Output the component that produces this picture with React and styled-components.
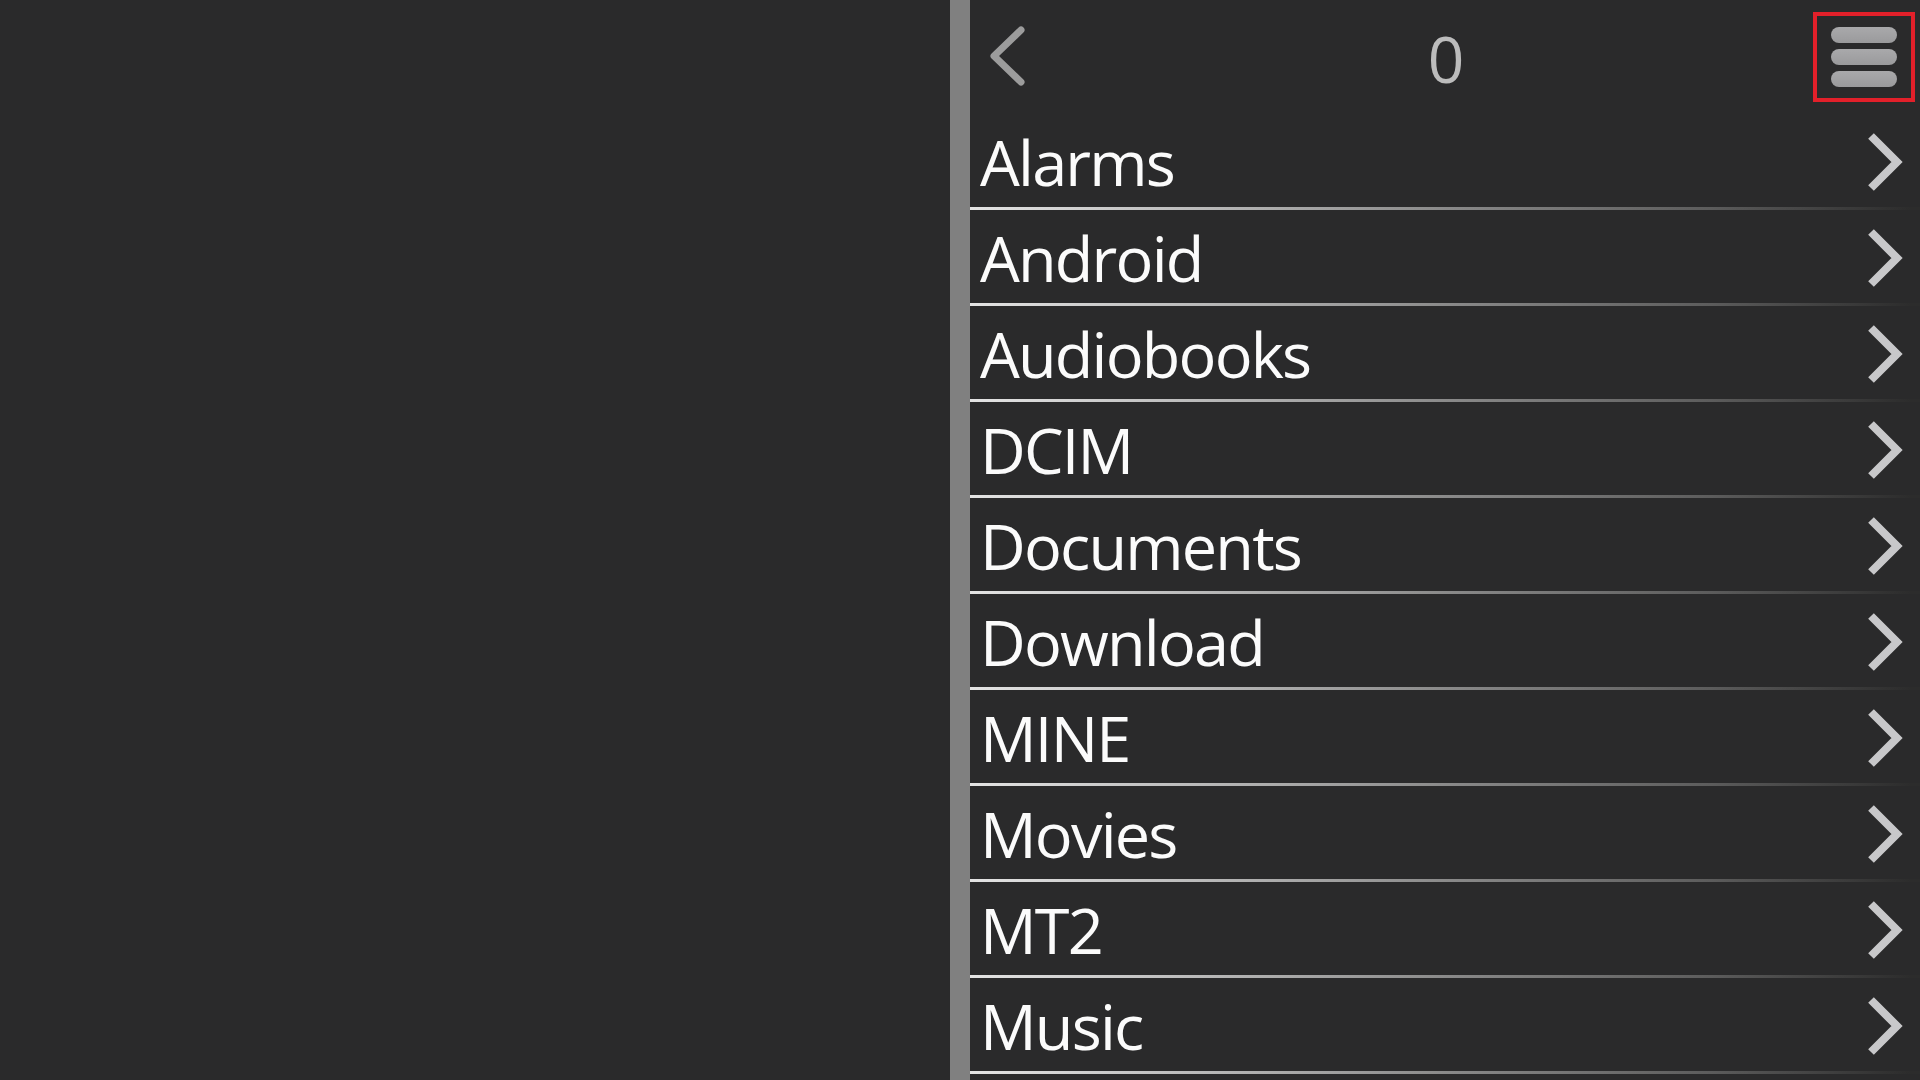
import React from "react";
import styled, { createGlobalStyle } from "styled-components";

const GlobalStyle = createGlobalStyle`
  html, body {
    margin: 0;
    padding: 0;
    background: #2a2a2b;
    height: 100%;
    overflow: hidden;
  }
  #root { height: 100%; }
`;

const Screen = styled.div`
  display: flex;
  height: 1080px;
  width: 1920px;
  background: #2a2a2b;
  font-family: "Open Sans", "Noto Sans", sans-serif;
`;

const EmptyPane = styled.div`
  width: 950px;
  flex: none;
`;

const Splitter = styled.div`
  width: 20px;
  flex: none;
  background: #808080;
`;

const Panel = styled.div`
  flex: 1;
  display: flex;
  flex-direction: column;
`;

const Header = styled.header`
  height: 114px;
  display: grid;
  grid-template-columns: 1fr auto 1fr;
  align-items: center;
`;

const BackButton = styled.button`
  justify-self: start;
  margin-left: 16px;
  margin-top: -2px;
  width: 40px;
  height: 62px;
  padding: 0;
  border: 0;
  background: none;
  display: flex;
`;

const Title = styled.div`
  font-size: 64px;
  line-height: 1;
  color: #bcbcbc;
  margin-top: 4px;
  margin-left: 2px;
`;

const MenuButton = styled.button`
  justify-self: end;
  margin-right: 5px;
  margin-top: -1px;
  width: 102px;
  height: 90px;
  box-sizing: border-box;
  border: 4px solid #e3202a;
  background: none;
  padding: 0;
  display: flex;
  flex-direction: column;
  align-items: center;
  justify-content: center;
  gap: 6px;
`;

const MenuBar = styled.span`
  display: block;
  width: 66px;
  height: 16px;
  border-radius: 8px;
  background: linear-gradient(to bottom, #a9a9ab, #9a9a9c);
`;

const List = styled.ul`
  list-style: none;
  margin: 0;
  padding: 0;
`;

const Row = styled.li`
  position: relative;
  height: 96px;
  box-sizing: border-box;
  padding: 3px 16px 3px 10px;
  display: flex;
  align-items: center;
  justify-content: space-between;

  &::after {
    content: "";
    position: absolute;
    left: 0;
    right: 0;
    bottom: 0;
    height: 3px;
    background: linear-gradient(
      to right,
      #e4e4e4 0%,
      #b8b8b8 25%,
      #8a8a8a 50%,
      #5c5c5c 78%,
      #2c2c2c 99%
    );
  }
`;

const Label = styled.span`
  font-size: 63px;
  line-height: 92px;
  color: #fbfbfb;
  letter-spacing: -1.8px;
`;

const Chevron = styled.svg`
  flex: none;
  width: 38px;
  height: 60px;
`;

const folders = [
  "Alarms",
  "Android",
  "Audiobooks",
  "DCIM",
  "Documents",
  "Download",
  "MINE",
  "Movies",
  "MT2",
  "Music",
];

export default function App() {
  return (
    <>
      <GlobalStyle />
      <Screen>
        <EmptyPane />
        <Splitter />
        <Panel>
          <Header>
            <BackButton aria-label="Back">
              <svg width="40" height="62" viewBox="0 0 40 62">
                <polyline
                  points="35,5 8,31 35,57"
                  fill="none"
                  stroke="#9c9c9c"
                  strokeWidth="7"
                  strokeLinecap="round"
                  strokeLinejoin="round"
                />
              </svg>
            </BackButton>
            <Title>0</Title>
            <MenuButton aria-label="Menu">
              <MenuBar />
              <MenuBar />
              <MenuBar />
            </MenuButton>
          </Header>
          <List>
            {folders.map((f) => (
              <Row key={f}>
                <Label>{f}</Label>
                <Chevron viewBox="0 0 38 60">
                  <polyline
                    points="5,4 31,30 5,56"
                    fill="none"
                    stroke="#c8c8ca"
                    strokeWidth="8"
                    strokeLinecap="butt"
                    strokeLinejoin="miter"
                  />
                </Chevron>
              </Row>
            ))}
          </List>
        </Panel>
      </Screen>
    </>
  );
}
